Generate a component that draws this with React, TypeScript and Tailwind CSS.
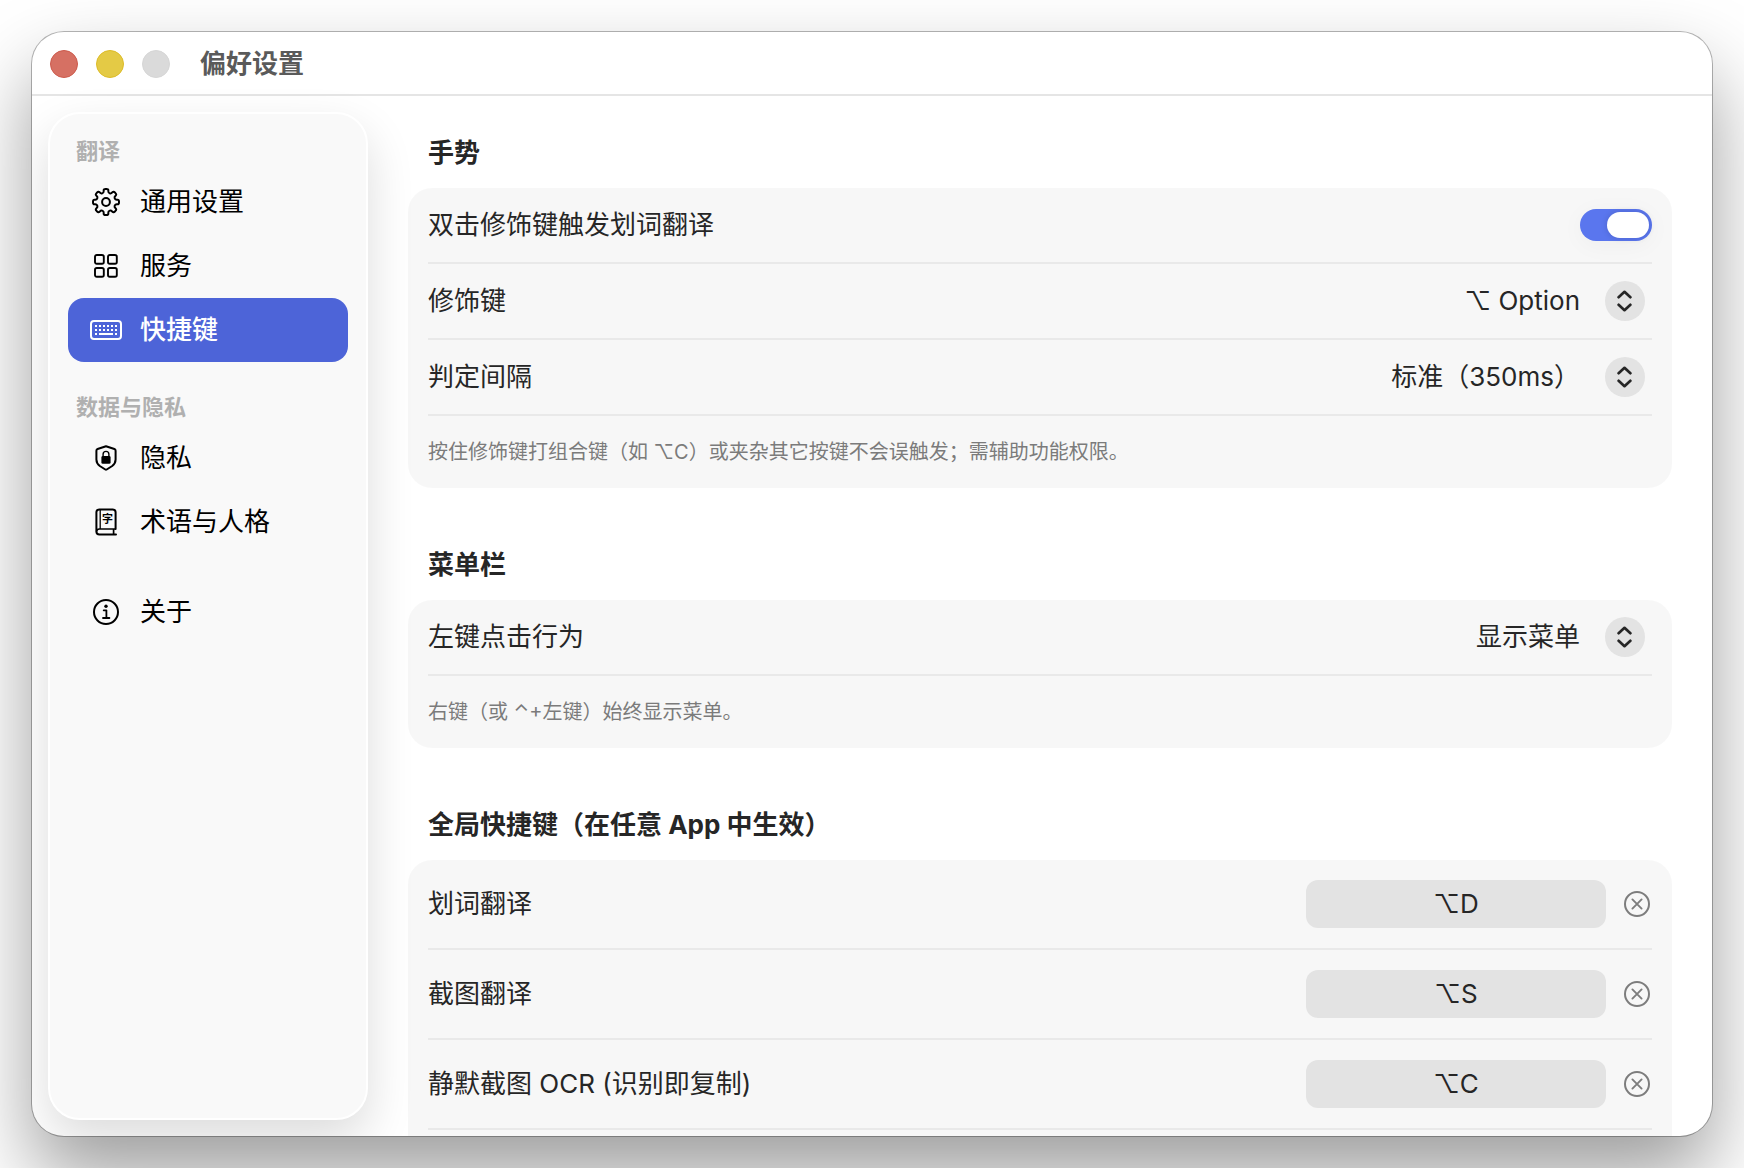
import { useState } from "react";
import type { ReactNode } from "react";

const point = (radius: number, deg: number) => {
  const rad = (deg * Math.PI) / 180;
  return [14 + radius * Math.sin(rad), 14 - radius * Math.cos(rad)];
};

// outline of an eight-tooth gear with softened corners
const gearPath = () => {
  const pts: number[][] = [];
  for (let i = 0; i < 8; i++) {
    const a = i * 45;
    pts.push(point(9.6, a - 13.5), point(13.2, a - 10.5), point(13.2, a + 10.5), point(9.6, a + 13.5));
  }
  const mix = (a: number[], b: number[], t: number) =>
    `${(a[0] + (b[0] - a[0]) * t).toFixed(2)} ${(a[1] + (b[1] - a[1]) * t).toFixed(2)}`;
  const parts = pts.map((p, i) => {
    const prev = pts[(i + pts.length - 1) % pts.length];
    const next = pts[(i + 1) % pts.length];
    return `${i === 0 ? "M" : "L"}${mix(p, prev, 0.42)} Q${p[0].toFixed(2)} ${p[1].toFixed(2)} ${mix(p, next, 0.42)}`;
  });
  return parts.join(" ") + "Z";
};

const GearIcon = () => (
  <svg width="28" height="28" viewBox="0 0 28 28" fill="none" stroke="currentColor" strokeWidth="2" strokeLinejoin="round">
    <path d={gearPath()} />
    <circle cx="14" cy="14" r="3.9" />
  </svg>
);

const GridIcon = () => (
  <svg width="24" height="24" viewBox="0 0 24 24" fill="none" stroke="currentColor" strokeWidth="1.9">
    <rect x="1" y="1" width="8.8" height="8.8" rx="1.8" />
    <rect x="14" y="1" width="8.8" height="8.8" rx="1.8" />
    <rect x="1" y="14" width="8.8" height="8.8" rx="1.8" />
    <rect x="14" y="14" width="8.8" height="8.8" rx="1.8" />
  </svg>
);

const KeyboardIcon = () => (
  <svg width="32" height="20" viewBox="0 0 32 20" fill="none" stroke="currentColor" strokeWidth="2">
    <rect x="1" y="1" width="30" height="18" rx="3" />
    <path d="M5 6h22M5 10h22" strokeDasharray="2 2" />
    <path d="M5 14h2M9 14h14M25 14h2" />
  </svg>
);

const ShieldIcon = () => (
  <svg width="22" height="26" viewBox="0 0 22 26" fill="none">
    <path
      d="M11 1.2 19.4 4Q20.6 4.4 20.6 5.7V14.6C20.6 17.6 19.3 19.4 17.2 21L11.7 24.5Q11 24.9 10.3 24.5L4.8 21C2.7 19.4 1.4 17.6 1.4 14.6V5.7Q1.4 4.4 2.6 4Z"
      stroke="currentColor"
      strokeWidth="2"
      strokeLinejoin="round"
    />
    <rect x="6.4" y="11" width="9.2" height="7.8" rx="1.4" fill="currentColor" />
    <path d="M8.1 11.5V9.3a2.9 2.9 0 0 1 5.8 0v2.2" stroke="currentColor" strokeWidth="1.4" />
  </svg>
);

const BookIcon = () => (
  <svg width="22" height="28" viewBox="0 0 22 28" fill="none" stroke="currentColor">
    <path
      d="M20.6 21V4.2Q20.6 1.4 17.8 1.4H4.2Q1.4 1.4 1.4 4.2V23.6Q1.4 26.6 4.4 26.6H21"
      strokeWidth="2"
      strokeLinecap="round"
      strokeLinejoin="round"
    />
    <path d="M1.6 23.6Q1.6 21 4.4 21H20.6M18.6 21V26.4" strokeWidth="1.7" />
    <path d="M5.2 1.6V21" strokeWidth="1.3" />
    <text
      x="12.6"
      y="15.2"
      textAnchor="middle"
      className="fill-current stroke-none font-['Noto_Sans_CJK_SC',sans-serif] text-[11px] font-bold"
    >
      字
    </text>
  </svg>
);

const InfoIcon = () => (
  <svg width="26" height="26" viewBox="0 0 26 26" fill="none" stroke="currentColor">
    <circle cx="13" cy="13" r="12" strokeWidth="2" />
    <circle cx="13" cy="7.3" r="1.7" fill="currentColor" stroke="none" />
    <path d="M10.7 11.3h2.7v7.4M10 19h6.4" strokeWidth="1.8" strokeLinecap="round" strokeLinejoin="round" />
  </svg>
);

const ChevronsIcon = () => (
  <svg width="16" height="22" viewBox="0 0 16 22" fill="none" stroke="currentColor" strokeWidth="2.7" strokeLinecap="round" strokeLinejoin="round">
    <path d="M1.6 7.2 7.5 1.8 13.4 7.2M1.6 14.8 7.5 20.2 13.4 14.8" />
  </svg>
);

const ClearIcon = () => (
  <svg width="26" height="26" viewBox="0 0 26 26" fill="none" stroke="currentColor" strokeLinecap="round">
    <circle cx="13" cy="13" r="12" strokeWidth="2" />
    <path d="M8.4 8.4l9.2 9.2M17.6 8.4l-9.2 9.2" strokeWidth="1.9" />
  </svg>
);

type NavItem = { id: string; label: string; icon: ReactNode };

const navGroups: { title: string; items: NavItem[] }[] = [
  {
    title: "翻译",
    items: [
      { id: "general", label: "通用设置", icon: <GearIcon /> },
      { id: "services", label: "服务", icon: <GridIcon /> },
      { id: "shortcuts", label: "快捷键", icon: <KeyboardIcon /> },
    ],
  },
  {
    title: "数据与隐私",
    items: [
      { id: "privacy", label: "隐私", icon: <ShieldIcon /> },
      { id: "glossary", label: "术语与人格", icon: <BookIcon /> },
    ],
  },
  {
    title: "",
    items: [{ id: "about", label: "关于", icon: <InfoIcon /> }],
  },
];

const shortcuts = [
  { id: "selection", label: "划词翻译", keys: "⌥D" },
  { id: "screenshot", label: "截图翻译", keys: "⌥S" },
  { id: "ocr", label: "静默截图 OCR (识别即复制)", keys: "⌥C" },
];

const Section = ({ title, children }: { title: string; children: ReactNode }) => (
  <section>
    <h2 className="mb-[19px] px-5 text-[26px] leading-8 font-bold">{title}</h2>
    <div className="rounded-3xl bg-black/[0.033] px-5">{children}</div>
  </section>
);

const Row = ({ id, label, children }: { id: string; label: string; children: ReactNode }) => (
  <div className="flex h-[76px] items-center justify-between border-b-2 border-[#e9e9e9]">
    <label htmlFor={id}>{label}</label>
    {children}
  </div>
);

const Note = ({ children }: { children: ReactNode }) => (
  <p className="flex h-[72px] items-center text-xl text-[#7b7b7b]">{children}</p>
);

const Picker = ({ id, value }: { id: string; value: string }) => (
  <div className="grid items-center">
    <select
      id={id}
      defaultValue={value}
      className="col-start-1 row-start-1 h-10 appearance-none bg-transparent pr-[72px] text-right outline-none"
    >
      <option value={value}>{value}</option>
    </select>
    <span className="pointer-events-none col-start-1 row-start-1 mr-[7px] flex h-10 w-10 items-center justify-center justify-self-end rounded-full bg-[#e3e3e3]">
      <ChevronsIcon />
    </span>
  </div>
);

export default function App() {
  const [active, setActive] = useState("shortcuts");
  const [doubleTap, setDoubleTap] = useState(true);

  return (
    <div className="flex h-screen overflow-hidden bg-white p-8 font-[Inter,'Noto_Sans_CJK_SC',sans-serif] text-[26px] leading-9 text-[#262626]">
      <div className="flex flex-1 flex-col overflow-hidden rounded-[32px] bg-white shadow-[0_0_0_1px_rgba(0,0,0,0.28),0_40px_80px_rgba(0,0,0,0.39)]">
        <header className="flex h-16 shrink-0 items-center gap-[18px] border-b-2 border-[#e5e5e5] px-[18px] pt-[2px]">
          <button aria-label="关闭" className="h-7 w-7 rounded-full border border-[#cc5a4c] bg-[#d67063]" />
          <button aria-label="最小化" className="h-7 w-7 rounded-full border border-[#dcbb28] bg-[#e4ca45]" />
          <button aria-label="缩放" disabled className="h-7 w-7 rounded-full border border-[#d5d5d5] bg-[#dadada]" />
          <h1 className="ml-3 font-bold text-[#5a5a5a]">偏好设置</h1>
        </header>

        <div className="flex min-h-0 flex-1">
          <nav className="m-4 mr-0 flex w-80 shrink-0 flex-col gap-[26px] rounded-[32px] border-2 border-white bg-[#f9f9f9] px-[18px] pt-[18px] shadow-[0_20px_48px_rgba(0,0,0,0.14)]">
            {navGroups.map((group) => (
              <div key={group.items[0].id}>
                {group.title && (
                  <h2 className="flex h-[38px] items-center px-2 text-[22px] font-bold text-[#b0b0b0]">{group.title}</h2>
                )}
                {group.items.map((item) => (
                  <button
                    key={item.id}
                    onClick={() => setActive(item.id)}
                    className={
                      active === item.id
                        ? "flex h-16 w-full items-center gap-4 rounded-2xl bg-[#4d64d8] px-5 font-medium text-white"
                        : "flex h-16 w-full items-center gap-4 rounded-2xl px-5 text-black"
                    }
                  >
                    <span className="flex w-9 justify-center">{item.icon}</span>
                    {item.label}
                  </button>
                ))}
              </div>
            ))}
          </nav>

          <main className="flex min-w-0 flex-1 flex-col gap-[61px] overflow-y-auto px-10 pt-[41px] [scrollbar-width:none]">
            <Section title="手势">
              <Row id="double-tap" label="双击修饰键触发划词翻译">
                <input
                  id="double-tap"
                  type="checkbox"
                  role="switch"
                  checked={doubleTap}
                  onChange={(e) => setDoubleTap(e.target.checked)}
                  className="h-8 w-[72px] appearance-none rounded-full bg-[#d0d0d0] p-[3px] shadow-[0_4px_24px_rgba(0,0,0,0.04)] before:block before:h-[26px] before:w-[42px] before:rounded-full before:bg-white before:shadow-[0_0_6px_rgba(0,0,0,0.15)] checked:bg-[#5a76ee] checked:before:translate-x-6"
                />
              </Row>
              <Row id="modifier" label="修饰键">
                <Picker id="modifier" value="⌥ Option" />
              </Row>
              <Row id="interval" label="判定间隔">
                <Picker id="interval" value="标准（350ms）" />
              </Row>
              <Note>按住修饰键打组合键（如 ⌥C）或夹杂其它按键不会误触发；需辅助功能权限。</Note>
            </Section>

            <Section title="菜单栏">
              <Row id="left-click" label="左键点击行为">
                <Picker id="left-click" value="显示菜单" />
              </Row>
              <Note>右键（或 ⌃+左键）始终显示菜单。</Note>
            </Section>

            <Section title="全局快捷键（在任意 App 中生效）">
              <div className="pb-10">
                {shortcuts.map((item) => (
                  <div key={item.id} className="flex h-[90px] items-center border-b-2 border-[#e9e9e9] pr-[2px]">
                    <label htmlFor={item.id} className="flex-1">
                      {item.label}
                    </label>
                    <button id={item.id} className="h-12 w-[300px] rounded-xl bg-[#e3e3e3]">
                      {item.keys}
                    </button>
                    <button aria-label="清除" className="ml-[18px] text-[#7d7d7d]">
                      <ClearIcon />
                    </button>
                  </div>
                ))}
              </div>
            </Section>
          </main>
        </div>
      </div>
    </div>
  );
}
